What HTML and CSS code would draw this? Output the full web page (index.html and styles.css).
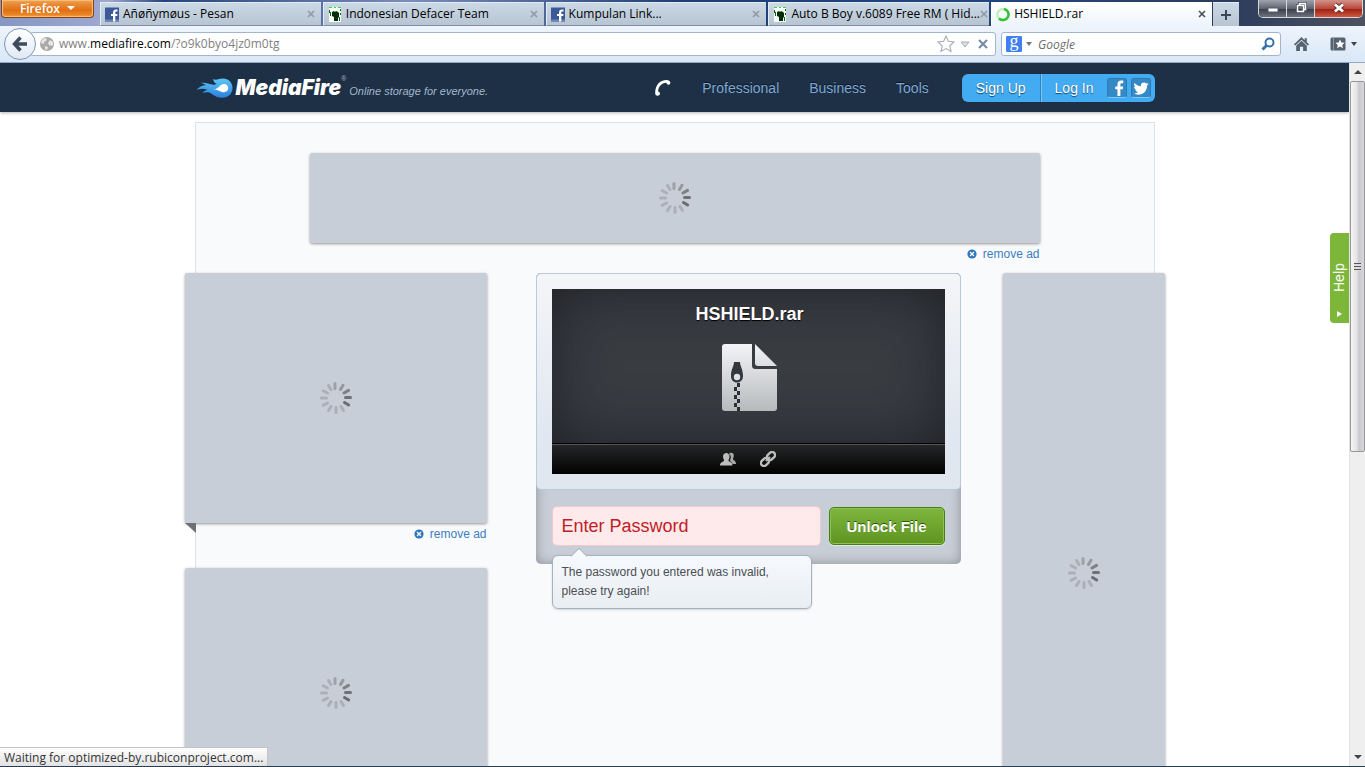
FILE: index.html
```
<!DOCTYPE html>
<html lang="en">
<head>
    <meta charset="UTF-8">
    <meta name="viewport" content="width=device-width, initial-scale=1.0">
    <title>HSHIELD.rar</title>
    <link rel="stylesheet" href="styles.css">
</head>
<body>
    <!-- Shared icons -->
    <svg class="sprite" aria-hidden="true">
        <symbol id="icon-spinner" viewBox="-16 -16 32 32">
            <g stroke="#6b6d74" stroke-width="3" stroke-linecap="round">
                <path d="M-1 -9.500V-14.500" opacity="0.450"/>
                <path d="M4.500 -8.500L7 -12.800" opacity="0.550"/>
                <path d="M8 -5L12.500 -7.600" opacity="0.800"/>
                <path d="M9.500 -0.500H14.500" opacity="0.950"/>
                <path d="M8.500 4.500L12.700 7"/>
                <path d="M5 8.500L7.500 12.500" opacity="0.300"/>
                <path d="M0 9.500V14.500" opacity="0.300"/>
                <path d="M-5 8.500L-7.500 12.500" opacity="0.300"/>
                <path d="M-8.500 5L-12.700 7.300" opacity="0.300"/>
                <path d="M-9.500 0H-14.500" opacity="0.300"/>
                <path d="M-8.500 -5L-12.700 -7.300" opacity="0.300"/>
                <path d="M-5 -8.500L-7.500 -12.500" opacity="0.300"/>
            </g>
        </symbol>
        <symbol id="icon-facebook" viewBox="0 0 14 14">
            <rect width="14" height="14" fill="#3b5998"/>
            <rect y="12" width="14" height="2" fill="#6d84b4"/>
            <path d="M8 14V8.500H6V6.500h2V5c0-2 1.200-3 3-3h1.500v2H11.500c-.900 0-1.200.400-1.200 1.200v1.300h2.200l-.300 2h-1.900V14z" fill="#fff"/>
        </symbol>
        <symbol id="icon-guy" viewBox="0 0 12 15">
            <rect width="12" height="15" fill="#f4fff4"/>
            <path d="M3 5l2-1 1 1 1-1 2 1 1 1v4l-1 1v3H5v-4L3 9z" fill="#062c0a"/>
            <path d="M0 .500h3M5 .500h2M9 .500h3" stroke="#3bd34a"/>
            <path d="M.500 3v3M1.500 5v4M11.500 2v2M11.500 6v2M10.500 10v4" stroke="#155e1e"/>
        </symbol>
        <symbol id="icon-remove" viewBox="0 0 10 10">
            <circle cx="5" cy="5" r="4.600" fill="#2f77bd"/>
            <path d="M3 3l4 4M7 3L3 7" stroke="#fff" stroke-width="1.200"/>
        </symbol>
        <symbol id="icon-close" viewBox="0 0 8 8">
            <path d="M1 1l6 6M7 1L1 7" stroke="currentColor" stroke-width="1.600"/>
        </symbol>
    </svg>

    <div class="tab-bar">
        <button class="firefox-button" type="button">Firefox <span class="arrow"></span></button>
        <div class="tabs">
            <div class="tab">
                <svg class="favicon"><use href="#icon-facebook"/></svg>
                <span class="tab-title">Añøñymøus - Pesan</span>
                <button class="tab-close" type="button" aria-label="Close tab"><svg><use href="#icon-close"/></svg></button>
            </div>
            <div class="tab">
                <svg class="favicon"><use href="#icon-guy"/></svg>
                <span class="tab-title">Indonesian Defacer Team</span>
                <button class="tab-close" type="button" aria-label="Close tab"><svg><use href="#icon-close"/></svg></button>
            </div>
            <div class="tab">
                <svg class="favicon"><use href="#icon-facebook"/></svg>
                <span class="tab-title">Kumpulan Link...</span>
                <button class="tab-close" type="button" aria-label="Close tab"><svg><use href="#icon-close"/></svg></button>
            </div>
            <div class="tab">
                <svg class="favicon"><use href="#icon-guy"/></svg>
                <span class="tab-title">Auto B Boy v.6089 Free RM ( Hid...</span>
                <button class="tab-close" type="button" aria-label="Close tab"><svg><use href="#icon-close"/></svg></button>
            </div>
            <div class="tab active">
                <svg class="favicon" viewBox="0 0 14 14" fill="none" stroke-width="2.500">
                    <circle cx="7" cy="7" r="5.600" stroke="#c3efc0"/>
                    <path d="M8 1.500A5.600 5.600 0 1 1 3 11" stroke="#2fc431"/>
                </svg>
                <span class="tab-title">HSHIELD.rar</span>
                <button class="tab-close" type="button" aria-label="Close tab"><svg><use href="#icon-close"/></svg></button>
            </div>
        </div>
        <button class="new-tab" type="button" aria-label="New tab">
            <svg viewBox="0 0 10 10"><path d="M5 0v10M0 5h10" stroke="#3c4654" stroke-width="2"/></svg>
        </button>
        <div class="window-controls">
            <button type="button" aria-label="Minimize">
                <svg viewBox="0 0 14 14"><rect x="2" y="7" width="10" height="4" fill="#fff" stroke="#555a66"/></svg>
            </button>
            <button type="button" aria-label="Restore">
                <svg viewBox="0 0 14 14"><path d="M5.500 4V2.500h6v6H10M3.500 4.500h6v6h-6z" fill="none" stroke="#444a58" stroke-width="3"/><path d="M5.500 4V2.500h6v6H10M3.500 4.500h6v6h-6z" fill="none" stroke="#fff" stroke-width="1.500"/></svg>
            </button>
            <button class="close" type="button" aria-label="Close">
                <svg viewBox="0 0 14 14"><path d="M3 3.500l8 7M11 3.500l-8 7" stroke="#5b2a2a" stroke-width="4.500"/><path d="M3 3.500l8 7M11 3.500l-8 7" stroke="#fff" stroke-width="2.800"/></svg>
            </button>
        </div>
    </div>

    <div class="nav-bar">
        <button class="back" type="button" aria-label="Back">
            <svg viewBox="0 0 16 16"><path d="M8.500 1.500L2.500 8l6 6.500M3 8h12" fill="none" stroke="#3e4b5b" stroke-width="3.400"/></svg>
        </button>
        <div class="url-bar">
            <svg class="globe" viewBox="0 0 14 14">
                <circle cx="7" cy="7" r="7" fill="#a9a9a9"/>
                <path d="M2 3l3-2 2 1-1 2-2 1v2L1 6zM8 6l2-3 3 2v3l-2 1-2-1zM5 9l3 1-1 3-2-1z" fill="#e6e6e6"/>
            </svg>
            <div class="url" role="textbox" contenteditable="true" spellcheck="false" aria-label="Address">www.<b>mediafire.com</b>/?o9k0byo4jz0m0tg</div>
            <button type="button" aria-label="Bookmark this page">
                <svg class="star" viewBox="0 0 16 16"><path d="M8 1l2.100 4.600 5 .600-3.700 3.400 1 5L8 12.100l-4.400 2.500 1-5L.900 6.200l5-.600z" fill="#fff" stroke="#a5adb6"/></svg>
            </button>
            <button type="button" aria-label="Show history">
                <svg class="drop" viewBox="0 0 10 7"><path d="M1 1h8L5 6z" fill="#dde1e6" stroke="#a5adb6"/></svg>
            </button>
            <button type="button" aria-label="Stop">
                <svg class="stop" viewBox="0 0 10 10"><path d="M1 1l8 8M9 1L1 9" stroke="#7a8ba3" stroke-width="2.200"/></svg>
            </button>
        </div>
        <form class="search-bar">
            <span class="google">g</span>
            <span class="arrow"></span>
            <input type="text" placeholder="Google" aria-label="Search">
            <button type="submit" aria-label="Search">
                <svg viewBox="0 0 14 14"><circle cx="8.500" cy="5.500" r="4" fill="none" stroke="#3471ab" stroke-width="2"/><path d="M5.500 8.500L1.500 12.500" stroke="#3471ab" stroke-width="3"/></svg>
            </button>
        </form>
        <button class="home" type="button" aria-label="Home">
            <svg viewBox="0 0 16 15"><path d="M8 1L.800 8l1.400 1L8 3.500 13.800 9l1.400-1L13 5.800V2h-2v2z" fill="#56626f"/><path d="M3 9.200l5-4.700 5 4.700V14H9.500v-4h-3v4H3z" fill="#56626f"/></svg>
        </button>
        <button class="bookmarks" type="button" aria-label="Bookmarks">
            <svg viewBox="0 0 16 14"><rect x=".500" y=".500" width="15" height="13" rx="1.500" fill="#56626f"/><path d="M3.500 1v12" stroke="#8b96a3"/><path d="M10 2.500l1.400 3 3.200.300-2.400 2.200.700 3.200L10 9.600l-2.900 1.600.700-3.200-2.400-2.200 3.200-.300z" fill="#fff"/></svg>
            <span class="arrow"></span>
        </button>
    </div>

    <div class="viewport">
        <div class="page">
            <header>
                <div class="header-inner">
                    <a class="logo" href="#">
                        <svg viewBox="0 0 37 20">
                            <defs>
                                <linearGradient id="flame" x1="0" y1="0" x2="0" y2="1">
                                    <stop offset="0" stop-color="#5cc8f6"/>
                                    <stop offset="1" stop-color="#2c7fe0"/>
                                </linearGradient>
                            </defs>
                            <path d="M17 1.200C21 2.600 23 .500 27 .500c5.500 0 9.500 4 9.500 9.500s-4 9.700-10 9.700c-4.500 0-7.500-1.300-11-4-2.700-2-5.700-1.700-9-.700 1.500-2 3.300-2.700 5-3C8 10 4.500 10.500.500 12 3 8.800 6.300 7.300 10 7.200 8.600 6.200 7 5.400 4.500 5c4-1 8 .500 11.500 1.500 2 .500 3.700.200 4.700-.800C18.500 5.200 17.700 3.500 17 1.200z" fill="url(#flame)"/>
                            <path d="M17.500 11.500c3-.500 4.500-1.600 6-3.200 1.800-2 3.400-2.300 4.700-2.300 2.400 0 4 1.800 4 4.100s-1.700 4.200-4.200 4.200c-3.500 0-5-2.800-10.500-2.800z" fill="#fff"/>
                        </svg>
                        <span class="name">MediaFire</span><span class="reg">®</span>
                    </a>
                    <span class="tagline">Online storage for everyone.</span>
                    <nav>
                        <a class="phone" href="#" aria-label="Contact">
                            <svg viewBox="0 0 18 18"><path d="M12.500 1C6 1 1 6 1.200 14.500c.100 3 4.500 2.800 4.800.200.100-1.200-.900-1.900-1.800-2.300C4 8 7.500 4 12.300 3.700c.400.900.900 2 2.200 2C17.300 5.500 17.300 1.200 12.500 1z" fill="#fff"/></svg>
                        </a>
                        <a href="#">Professional</a>
                        <a href="#">Business</a>
                        <a href="#">Tools</a>
                    </nav>
                    <div class="account">
                        <a class="sign-up" href="#">Sign Up</a>
                        <a class="log-in" href="#">Log In</a>
                        <a class="social" href="#" aria-label="Log in with Facebook">
                            <svg viewBox="0 0 18 18"><path d="M9.500 18v-7.500H7V7.400h2.500V5c0-2.800 1.700-4.300 4.200-4.300H16v3h-1.500c-1.300 0-1.700.600-1.700 1.700v2H16l-.500 3.100h-2.700V18z" fill="#fff"/></svg>
                        </a>
                        <a class="social" href="#" aria-label="Log in with Twitter">
                            <svg viewBox="0 0 18 18"><path d="M17.500 4.300c-.600.300-1.200.500-1.900.600.700-.400 1.200-1 1.400-1.800-.600.400-1.300.600-2.100.800a3.500 3.500 0 0 0-6 3.100C6 6.900 3.500 5.500 1.800 3.400c-1 1.700-.400 3.600 1 4.600-.600 0-1.100-.200-1.600-.400 0 1.700 1.200 3.100 2.800 3.400-.500.100-1 .200-1.600.100.500 1.400 1.800 2.300 3.300 2.400A7 7 0 0 1 .500 15c7.500 4.300 15.400-.800 15.300-8.700.700-.500 1.200-1.200 1.700-2z" fill="#fff"/></svg>
                        </a>
                    </div>
                </div>
            </header>

            <main>
                <div class="banner">
                    <div class="ad"><svg class="spinner"><use href="#icon-spinner"/></svg></div>
                    <a class="remove-ad" href="#"><svg><use href="#icon-remove"/></svg>remove ad</a>
                </div>

                <div class="columns">
                    <div class="left">
                        <div class="ad"><svg class="spinner"><use href="#icon-spinner"/></svg></div>
                        <span class="fold"></span>
                        <a class="remove-ad" href="#"><svg><use href="#icon-remove"/></svg>remove ad</a>
                        <div class="ad"><svg class="spinner"><use href="#icon-spinner"/></svg></div>
                    </div>

                    <div class="file-box">
                        <div class="file-card">
                            <div class="preview">
                                <h1>HSHIELD.rar</h1>
                                <svg class="zip" viewBox="0 0 55 68">
                                    <defs>
                                        <linearGradient id="paper" x1="0" y1="0" x2="0" y2="1">
                                            <stop offset="0" stop-color="#f3f4f8"/>
                                            <stop offset="1" stop-color="#b7babc"/>
                                        </linearGradient>
                                        <linearGradient id="corner" x1="0" y1="0" x2="0" y2="1">
                                            <stop offset="0" stop-color="#f3f4f8"/>
                                            <stop offset="1" stop-color="#dcdee2"/>
                                        </linearGradient>
                                    </defs>
                                    <path d="M3 0h27v21c0 3 1 4 4 4h21v39a3 3 0 0 1-3 3H3a3 3 0 0 1-3-3V3a3 3 0 0 1 3-3z" fill="url(#paper)"/>
                                    <path d="M33 0l22 22H36c-2 0-3-1-3-3z" fill="url(#corner)"/>
                                    <path d="M12 18h6c0 4 3 7 3 14 0 4-2.500 6.500-6 6.500S9 36 9 32c0-7 3-10 3-14z" fill="#34383e"/>
                                    <circle cx="15" cy="33" r="3.200" fill="#dfe1e5"/>
                                    <path d="M15 39h3v4h-3zM12 43h3v4h-3zM15 47h3v4h-3zM12 51h3v4h-3zM15 55h3v4h-3zM12 59h3v4h-3zM15 63h3v4h-3z" fill="#2c2f34"/>
                                </svg>
                            </div>
                            <div class="toolbar">
                                <button type="button" aria-label="Share">
                                    <svg viewBox="0 0 16 16"><path d="M9 3c1-2 5-2 4.800 1.500 0 2-1 3-.800 4 .500 1 3 .800 3 4.500h-3.500c-.500-2-2.500-2.500-2.500-3.500S11 7 10.800 5z" fill="#a8a8a8"/><path d="M3 5.500C3 .800 9.500.800 9.500 5.500c0 2-1 3-1 4.300.500 1.200 4 1.200 4 4.700H0c0-3.500 3.500-3.500 4-4.700 0-1.300-1-2.300-1-4.300z" fill="#bdbdbd"/></svg>
                                </button>
                                <button type="button" aria-label="Copy link">
                                    <svg viewBox="0 0 16 16" fill="none" stroke="#bdbdbd" stroke-width="2.400"><rect x="6.500" y="2" width="9" height="6" rx="3" transform="rotate(-45 11 5)"/><rect x=".500" y="8" width="9" height="6" rx="3" transform="rotate(-45 5 11)"/><path d="M6 10l4-4"/></svg>
                                </button>
                            </div>
                        </div>
                        <form class="password-form">
                            <input type="password" placeholder="Enter Password" aria-label="Password">
                            <button type="submit">Unlock File</button>
                            <div class="error">The password you entered was invalid, please try again!</div>
                        </form>
                    </div>

                    <div class="right">
                        <div class="ad"><svg class="spinner"><use href="#icon-spinner"/></svg></div>
                    </div>
                </div>
            </main>

            <a class="help" href="#">Help<span class="help-arrow"></span></a>
        </div>

        <div class="scrollbar">
            <span class="scroll-up"></span>
            <span class="thumb"></span>
            <span class="scroll-down"></span>
        </div>

        <div class="status">Waiting for optimized-by.rubiconproject.com...</div>
    </div>
</body>
</html>
```

FILE: styles.css
```
* {
    box-sizing: border-box;
}

body {
    margin: 0;
    height: 100vh;
    display: flex;
    flex-direction: column;
    overflow: hidden;
    font-family: "Liberation Sans", Arial, sans-serif;
    font-size: 12px;
    background-color: #fff;
    border-bottom: 1px solid #2b3d50;
}

a {
    text-decoration: none;
}

button {
    padding: 0;
    border: none;
    background: none;
    font-family: inherit;
    cursor: pointer;
}

svg {
    display: block;
    flex: none;
}

.sprite {
    position: absolute;
    width: 0;
    height: 0;
}

.arrow {
    display: inline-block;
    border: 3px solid transparent;
    border-top: 4px solid #444;
    border-bottom: none;
}

/* Browser tabs */
.tab-bar {
    display: flex;
    align-items: flex-start;
    height: 26px;
    flex: none;
    padding: 0 2px 0 1px;
    background: linear-gradient(to right, #8597c4 0, #9fa9d0 8%, #24457c 12%, #7c8cbc 30%, #1f3f76 50%, #22467f 75%, #2c3c5c 90%, #4e5260 100%);
    font-family: "Open Sans", "Noto Sans", sans-serif;
}

.firefox-button {
    width: 93px;
    height: 18px;
    margin-right: 6px;
    border: 1px solid #8a4310;
    border-top: none;
    border-radius: 0 0 4px 4px;
    background: linear-gradient(#f0a04c, #e06f14 60%, #ee9330);
    box-shadow: inset 0 0 1px 1px #f7c184;
    color: #fff;
    font-size: 12px;
    font-weight: 600;
    line-height: 16px;
}

.firefox-button .arrow {
    margin: 0 0 3px 4px;
    border-width: 4px;
    border-top: 4px solid #fff;
    border-bottom: none;
}

.tabs {
    flex: 1;
    display: flex;
    gap: 2px;
    padding-top: 2px;
}

.tab {
    flex: 1;
    min-width: 0;
    height: 24px;
    display: flex;
    align-items: center;
    padding: 0 6px 0 4px;
    border-top: 1px solid #e3ebf5;
    border-left: 1px solid #e3ebf5;
    border-bottom: 1px solid #7e8ba0;
    background: linear-gradient(#cbd8e6, #b7c4d2);
}

.tab.active {
    border-color: #fff;
    border-bottom-color: #eef4fc;
    background: linear-gradient(#fff, #eef4fc);
}

.favicon {
    width: 14px;
    height: 15px;
    margin-right: 4px;
}

.tab-title {
    flex: 1;
    white-space: nowrap;
    color: #000;
    font-size: 12px;
    line-height: 20px;
    padding-bottom: 1px;
}

.tab-close {
    color: #8f98a3;
}

.tab-close svg {
    width: 8px;
    height: 8px;
}

.tab.active .tab-close {
    color: #4a4f57;
}

.new-tab {
    width: 26px;
    height: 24px;
    margin: 2px 0 0 1px;
    display: flex;
    align-items: center;
    justify-content: center;
    border-top: 1px solid #e3ebf5;
    background: linear-gradient(#cbd8e6, #b7c4d2);
}

.new-tab svg {
    width: 10px;
    height: 10px;
}

.window-controls {
    display: flex;
    margin-left: 19px;
    height: 18px;
    border: 1px solid #d3d7de;
    border-top: none;
    border-radius: 0 0 5px 5px;
    overflow: hidden;
}

.window-controls button {
    width: 28px;
    display: flex;
    justify-content: center;
    border-right: 1px solid #d3d7de;
    background: linear-gradient(#9ea3ac, #5f6570 50%, #3b404c 55%, #6d727d);
}

.window-controls .close {
    width: 47px;
    border-right: none;
    background: linear-gradient(#d3938a, #b9483a 50%, #9b2416 55%, #d1573f);
}

.window-controls svg {
    width: 14px;
    height: 14px;
    margin-top: 1px;
}

/* Address and search bars */
.nav-bar {
    position: relative;
    display: flex;
    align-items: center;
    height: 37px;
    flex: none;
    padding: 0 8px 0 4px;
    border-bottom: 1px solid #94a9c6;
    background: linear-gradient(#eef4fc, #d9e7f7);
    font-family: "Open Sans", "Noto Sans", sans-serif;
}

.nav-bar button {
    display: flex;
    align-items: center;
    justify-content: center;
}

.back {
    z-index: 1;
    width: 32px;
    height: 32px;
    border: 1px solid #8095b4;
    border-radius: 50%;
    background: linear-gradient(#fff, #dfe9f6);
}

.nav-bar .back {
    border: 1px solid #8095b4;
}

.back svg {
    width: 16px;
    height: 16px;
}

.url-bar,
.search-bar {
    display: flex;
    align-items: center;
    height: 24px;
    border: 1px solid #a3b5cc;
    border-radius: 3px;
    background-color: #fff;
}

.url-bar {
    flex: 1;
    margin-left: -6px;
    padding: 0 7px 0 9px;
    gap: 5px;
}

.globe {
    width: 14px;
    height: 14px;
}

.url {
    flex: 1;
    color: #7f7f7f;
    font-size: 12px;
    line-height: 20px;
    outline: none;
}

.url b {
    color: #000;
    font-weight: normal;
}

.star {
    width: 18px;
    height: 18px;
}

.drop {
    width: 10px;
    height: 7px;
}

.stop {
    width: 10px;
    height: 10px;
    margin-left: 3px;
}

.search-bar {
    width: 280px;
    margin-left: 5px;
    padding: 0 5px 0 4px;
}

.google {
    width: 16px;
    height: 16px;
    border-radius: 1px;
    background-color: #4080f0;
    color: #fff;
    font-family: "Liberation Serif", serif;
    font-size: 18px;
    line-height: 11px;
    text-align: center;
}

.search-bar .arrow {
    margin: 0 6px 0 4px;
    border-top-color: #777;
}

.search-bar input {
    flex: 1;
    min-width: 0;
    padding: 0;
    border: none;
    outline: none;
    font-family: inherit;
    font-size: 12px;
}

.search-bar input::placeholder {
    color: #6d6d6d;
    font-style: italic;
    opacity: 1;
}

.search-bar svg {
    width: 14px;
    height: 14px;
}

.home {
    margin: 0 20px 0 12px;
}

.home svg {
    width: 17px;
    height: 16px;
}

.bookmarks svg {
    width: 16px;
    height: 14px;
    margin-right: 5px;
}

/* Web page */
.viewport {
    position: relative;
    flex: 1;
    min-height: 0;
    display: flex;
}

.page {
    position: relative;
    flex: 1;
    display: flex;
    flex-direction: column;
    overflow: hidden;
}

header {
    height: 49px;
    flex: none;
    background-color: #1d3045;
    box-shadow: 0 1px 3px rgba(0, 0, 0, 0.3);
}

.header-inner {
    width: 960px;
    max-width: 100%;
    height: 100%;
    margin: 0 auto;
    display: flex;
    align-items: center;
}

.logo {
    display: flex;
    align-items: center;
    margin-left: 1px;
    color: #fff;
}

.logo svg {
    width: 37px;
    height: 20px;
    margin-right: 3px;
}

.name {
    font-family: Inter, "Liberation Sans", sans-serif;
    font-size: 21px;
    font-style: italic;
    font-weight: 900;
}

.reg {
    align-self: flex-start;
    color: #a9b4c0;
    font-size: 7px;
}

.tagline {
    margin: 6px 0 0 3px;
    color: #a3b6cd;
    font-size: 11px;
    font-style: italic;
}

nav {
    display: flex;
    align-items: center;
    gap: 30px;
    margin: 0 33px 0 auto;
}

nav a {
    color: #7fa8d5;
    font-size: 14px;
    text-shadow: 0 -1px 0 #0c1622;
}

.phone svg {
    width: 18px;
    height: 18px;
}

.account {
    display: flex;
    align-items: center;
    height: 28px;
    padding-right: 4px;
    border-radius: 6px;
    background-color: #43abf1;
    color: #fff;
    font-size: 14px;
    line-height: 28px;
    text-shadow: 0 1px 1px #17456d;
}

.account a {
    color: #fff;
}

.sign-up {
    padding: 0 14px;
    border-right: 1px solid #2c83c2;
}

.log-in {
    padding: 0 13px;
    border-left: 1px solid #7cc6f6;
}

.social {
    width: 20px;
    height: 20px;
    padding: 1px;
    border: 1px solid #2f7ab3;
    border-bottom-color: #7cc6f6;
    border-radius: 3px;
    background-color: #3589c4;
}

.social + .social {
    margin-left: 4px;
}

.social svg {
    width: 16px;
    height: 16px;
}

main {
    flex: 1;
    width: 960px;
    margin: 10px auto 0;
    padding-top: 30px;
    border: 1px solid #dbe2ea;
    border-bottom: none;
    background-color: #f9fafc;
}

.ad {
    display: flex;
    align-items: center;
    justify-content: center;
    border-radius: 2px;
    background-color: #c8ced7;
    box-shadow: 0 1px 3px rgba(0, 0, 0, 0.4);
}

.spinner {
    width: 32px;
    height: 32px;
}

.remove-ad {
    display: flex;
    align-items: center;
    justify-content: flex-end;
    height: 21px;
    color: #3a7fc1;
    font-size: 12px;
}

.remove-ad svg {
    width: 10px;
    height: 10px;
    margin-right: 6px;
}

.banner {
    width: 730px;
    margin: 0 auto 9px;
}

.banner .ad {
    height: 90px;
}

.columns {
    display: grid;
    grid-template-columns: 302px 1fr 162px;
    align-items: start;
    margin: 0 -11px;
}

.left .ad {
    height: 250px;
}

.left {
    position: relative;
}

.left .remove-ad {
    margin-bottom: 24px;
}

.fold {
    position: absolute;
    top: 250px;
    left: 0;
    border-top: 10px solid #6d7176;
    border-left: 11px solid transparent;
}

.right .ad {
    height: 600px;
}

.file-box {
    margin: 0 42px 0 49px;
    border-radius: 5px;
    background-color: #c8ced7;
    box-shadow: inset 0 0 12px rgba(0, 0, 0, 0.3);
}

.file-card {
    padding: 15px;
    border: 1px solid #b9c9de;
    border-radius: 5px;
    background: linear-gradient(#f4f5f7, #e2e8f1 70%, #dfe6ee);
}

.preview {
    display: flex;
    flex-direction: column;
    align-items: center;
    height: 154px;
    padding: 15px 0 0 3px;
    background-color: #393d42;
    box-shadow: inset 0 0 60px rgba(20, 20, 25, 0.7);
}

h1 {
    margin: 0 0 19px;
    color: #fff;
    font-size: 18px;
    line-height: 21px;
    text-shadow: 0 1px 1px #000;
}

.zip {
    width: 55px;
    height: 68px;
}

.toolbar {
    display: flex;
    justify-content: center;
    gap: 24px;
    height: 31px;
    border-top: 1px solid #000;
    background: linear-gradient(#262728, #020202);
    box-shadow: inset 0 1px 0 #55585b;
}

.toolbar svg {
    width: 16px;
    height: 16px;
}

.password-form {
    position: relative;
    display: flex;
    align-items: center;
    gap: 8px;
    padding: 16px 16px 18px;
    height: 74px;
}

.password-form input {
    flex: 1;
    min-width: 0;
    height: 40px;
    padding: 0 9px;
    border: 1px solid #f0c9cc;
    border-radius: 5px;
    background-color: #ffeaeb;
    font-family: inherit;
    font-size: 18px;
    outline: none;
}

.password-form input::placeholder {
    color: #bf2026;
    opacity: 1;
}

.password-form button {
    width: 116px;
    height: 38px;
    border: 1px solid #467f12;
    border-radius: 5px;
    background: linear-gradient(#7fb63e, #5e9521);
    box-shadow: inset 0 0 0 1px #8ec052, 0 1px 0 #e3e8ee;
    color: #fff;
    font-size: 15px;
    font-weight: bold;
    text-shadow: 0 -1px 0 #2d540a;
}

.error {
    position: absolute;
    top: 65px;
    left: 16px;
    width: 260px;
    padding: 7px 9px;
    border: 1px solid #a9b1ba;
    border-radius: 6px;
    background: linear-gradient(#f6f9fc, #e9eef3);
    box-shadow: 0 1px 2px rgba(0, 0, 0, 0.15);
    color: #4b4f54;
    font-size: 12px;
    line-height: 19px;
}

.error::before {
    content: "";
    position: absolute;
    top: -6px;
    left: 20px;
    width: 11px;
    height: 11px;
    border: 1px solid #a9b1ba;
    border-right: none;
    border-bottom: none;
    background-color: #f6f9fc;
    transform: rotate(45deg);
}

.help {
    position: absolute;
    top: 170px;
    right: 0;
    width: 19px;
    height: 90px;
    display: flex;
    align-items: center;
    writing-mode: vertical-rl;
    transform: rotate(180deg);
    padding-top: 6px;
    border-radius: 0 4px 4px 0;
    background-color: #7db739;
    color: #fff;
    font-size: 14px;
    line-height: 15px;
}

.help-arrow {
    order: -1;
    margin-bottom: 19px;
    border: 3px solid transparent;
    border-right: 5px solid #fff;
    border-left: none;
}

.scrollbar {
    width: 16px;
    flex: none;
    display: flex;
    flex-direction: column;
    align-items: center;
    padding: 7px 0;
    border-left: 1px solid #e3e3e3;
    background-color: #efefef;
}

.scroll-up,
.scroll-down {
    border: 4px solid transparent;
    border-top: none;
    border-bottom: 4px solid #444;
}

.scroll-down {
    margin-top: auto;
    border-top: 4px solid #444;
    border-bottom: none;
}

.thumb {
    width: 15px;
    height: 371px;
    margin-top: 7px;
    display: flex;
    align-items: center;
    justify-content: center;
    border: 1px solid #979797;
    border-radius: 2px;
    background: linear-gradient(to right, #f5f5f5, #e4e4e6 45%, #c9cacd 60%, #d7d7da);
}

.thumb::before {
    content: "";
    width: 7px;
    height: 8px;
    background: repeating-linear-gradient(#555 0, #555 1px, #ddd 1px, #ddd 3px);
}

.status {
    position: absolute;
    left: 0;
    bottom: 0;
    min-width: 264px;
    height: 19px;
    padding: 0 4px;
    border-top: 1px solid #c4c4c4;
    border-right: 1px solid #c4c4c4;
    background: linear-gradient(#fff, #e2e2e2);
    color: #333;
    font-family: "Open Sans", "Noto Sans", sans-serif;
    font-size: 12px;
    line-height: 19px;
    white-space: nowrap;
}
```
